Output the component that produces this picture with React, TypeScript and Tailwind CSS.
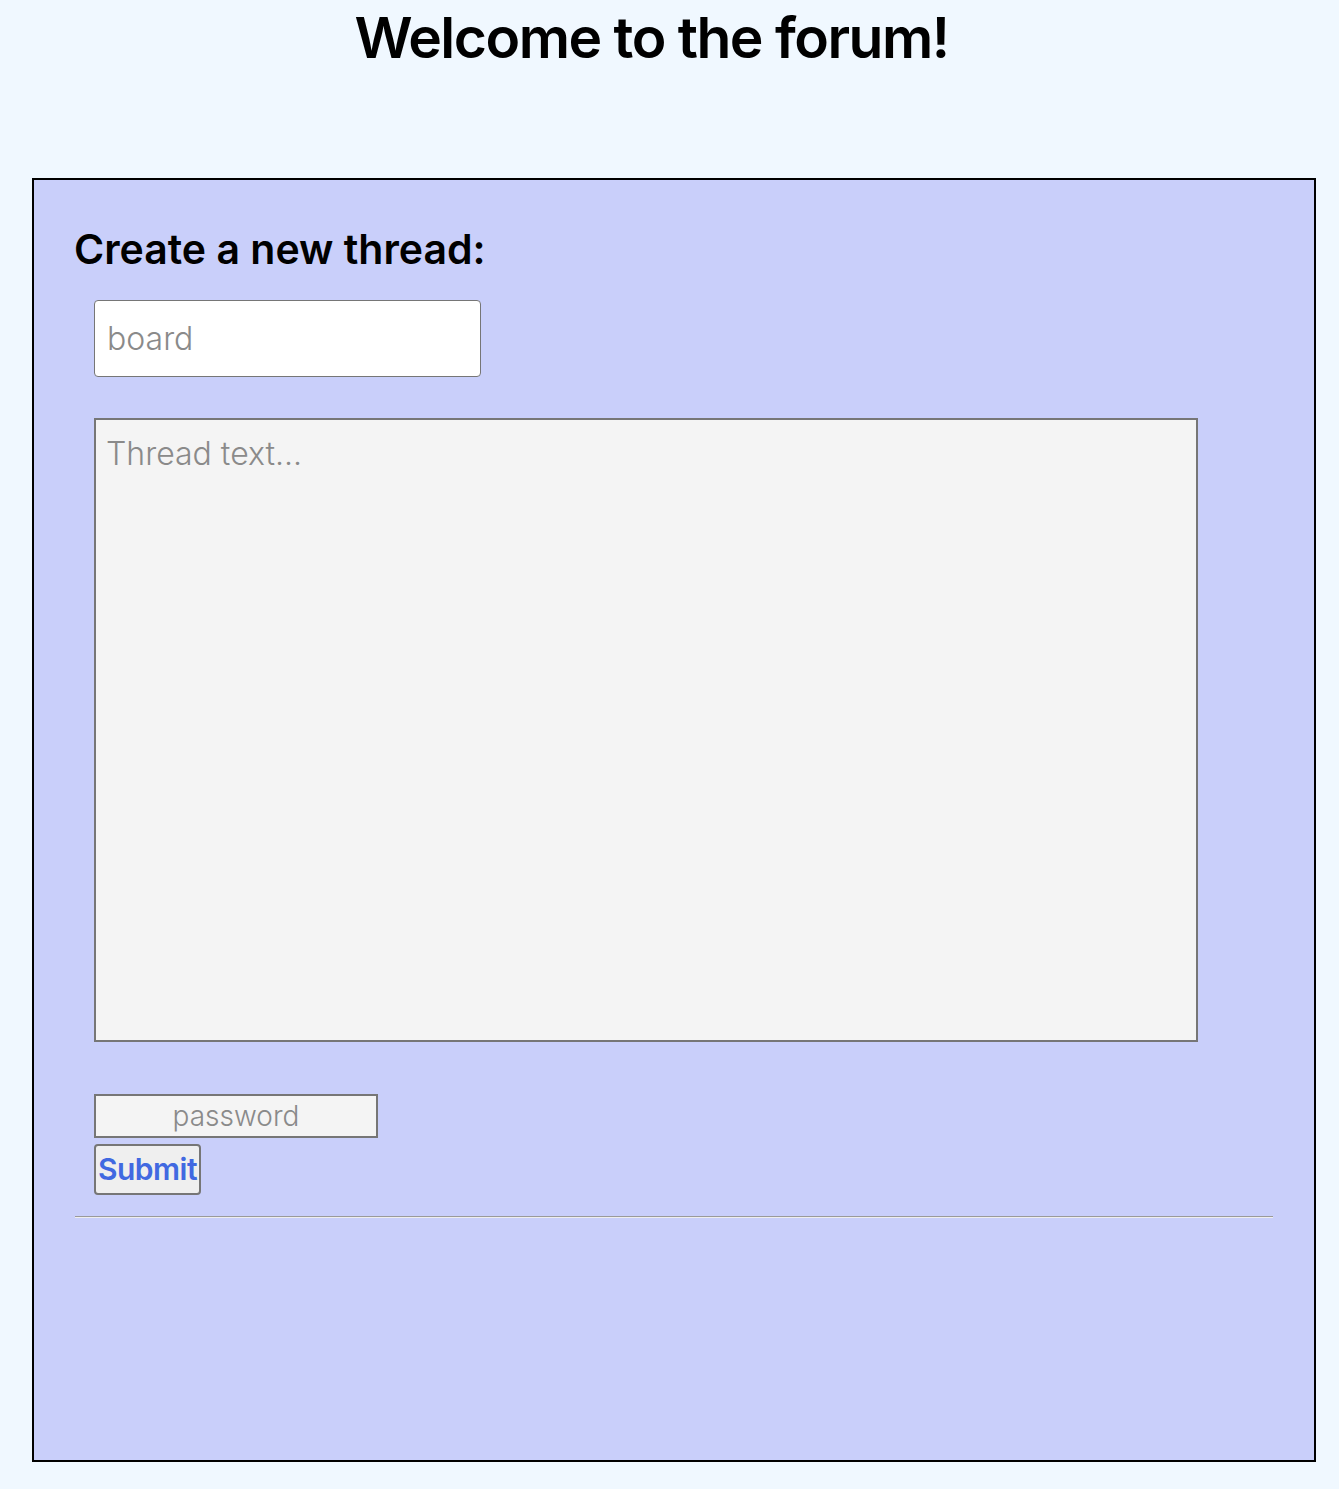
import React from 'react';

const font = { fontFamily: 'Inter, "Noto Sans", sans-serif' };

const App = () => {
  return (
    <main className="min-h-[1489px] bg-[#f0f8ff] text-black" style={font}>
      {/* //Title */}
      <h1 className="m-0 pr-[36px] pt-[2px] text-center text-[57px] font-semibold leading-[72px] tracking-[-1.5px]">
        Welcome to the forum!
      </h1>

      {/* //Panel */}
      <section className="ml-[32px] mt-[104px] h-[1284px] w-[1284px] border-2 border-black bg-[#c9cffa] px-[40px] pt-[45px]">
        <h2 className="m-0 text-[41px] font-semibold leading-[48px]">
          Create a new thread:
        </h2>

        <form className="flex flex-col items-start" onSubmit={(e) => e.preventDefault()}>
          <input
            type="text"
            placeholder="board"
            className="ml-[20px] mt-[27px] h-[77px] w-[387px] rounded-[4px] border-[1.5px] border-[#767676] bg-white px-[12px] text-[32px] font-light text-black outline-none placeholder:text-[#8a8a8a]"
          />
          <textarea
            placeholder="Thread text..."
            className="ml-[20px] mt-[41px] h-[624px] w-[1104px] resize-none border-2 border-[#767676] bg-[#f4f4f4] px-[10px] py-[14px] text-[32px] font-light leading-[40px] outline-none placeholder:text-[#8a8a8a]"
          />
          <input
            type="password"
            placeholder="password"
            className="ml-[20px] mt-[52px] h-[44px] w-[284px] border-2 border-[#767676] bg-[#f4f4f4] text-center text-[28px] font-light outline-none placeholder:text-[#8a8a8a]"
          />
          <button
            type="submit"
            className="ml-[20px] mt-[6px] h-[51px] w-[107px] rounded-[4px] border-2 border-[#767676] bg-[#efefef] p-0 text-[30px] font-semibold tracking-[-0.5px] text-[#4169e1]"
          >
            Submit
          </button>
        </form>

        {/* //Divider */}
        <div className="ml-[1px] mt-[21px] w-[1198px] border-t border-b border-t-[#9a9a9a] border-b-[#eeeeee]" />
      </section>
    </main>
  );
};

export default App;
